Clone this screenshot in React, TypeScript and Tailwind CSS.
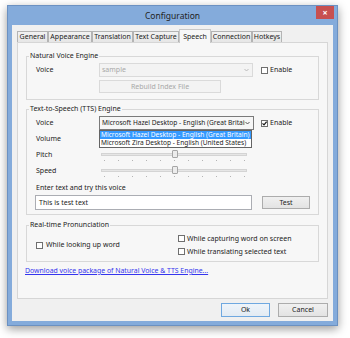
import React from 'react';

function Chevron({ color = '#444' }: { color?: string }) {
  return (
    <svg width="5" height="4" viewBox="0 0 5 4" className="shrink-0">
      <path d="M0.5 1 L2.5 3 L4.5 1" stroke={color} strokeWidth="0.9" fill="none" />
    </svg>
  );
}

function Check({ checked, className = '' }: { checked?: boolean; className?: string }) {
  return (
    <span className={`flex h-[7px] w-[7px] shrink-0 items-center justify-center border border-[#6f6f6f] bg-white ${className}`}>
      {checked && (
        <svg width="5" height="5" viewBox="0 0 5 5">
          <path d="M0.5 2.4 L2 3.9 L4.6 0.7" stroke="#1e1e1e" strokeWidth="1.2" fill="none" />
        </svg>
      )}
    </span>
  );
}

function Slider() {
  return (
    <div className="relative flex h-[16px] w-[151px] flex-col">
      <div className="ml-[2px] mr-[3px] mt-[6px] h-[3px] border border-[#d4d4d4] bg-[#e6e6e6]" />
      {/* thumb */}
      <div className="absolute left-[73px] top-[3px] h-[8px] w-[6px] rounded-[1px] border border-[#a6a6a6] bg-[#ececec]" />
      <div className="mt-[4px] flex justify-between px-[5px]">
        {Array.from({ length: 11 }).map((_, i) => (
          <span key={i} className="h-[1px] w-[1px] bg-[#b4b4b4]" />
        ))}
      </div>
    </div>
  );
}

const tabs = [
  { name: 'General', w: 'w-[31px]' },
  { name: 'Appearance', w: 'w-[44px]' },
  { name: 'Translation', w: 'w-[41px]' },
  { name: 'Text Capture', w: 'w-[46px]' },
  { name: 'Speech', w: 'w-[32px]', active: true },
  { name: 'Connection', w: 'w-[41px]' },
  { name: 'Hotkeys', w: 'w-[30px]' },
];

export default function App() {
  return (
    <div className="h-[338px] w-[350px] bg-white pl-[7px] pt-[5px] font-['Noto_Sans',sans-serif] text-[7px] leading-[10px] text-[#1b1b1b]">
      <div className="flex h-[321px] w-[331px] flex-col border border-[#6b91c2] bg-[#84abdb] shadow-[0_3px_9px_rgba(0,0,0,0.4)]">
        {/* title bar */}
        <div className="relative flex h-[19px] items-center justify-center text-[8.5px] text-[#222]">
          Configuration
          <div className="absolute right-[3px] top-0 flex h-[13px] w-[18px] items-center justify-center bg-[#c75050] text-[9px] font-bold leading-none text-white">
            ×
          </div>
        </div>

        {/* client area */}
        <div className="mx-[4px] mb-[4px] flex flex-1 flex-col bg-[#f0f0f0] pb-[4px] pt-[4px]">
          <div className="flex h-[13px] items-end pl-[5px]">
            {tabs.map((t) =>
              t.active ? (
                <div
                  key={t.name}
                  className={`relative z-10 -mb-[1px] flex h-[14px] ${t.w} items-center justify-center border border-b-0 border-[#c8c8c8] bg-[#f7f7f7]`}
                >
                  {t.name}
                </div>
              ) : (
                <div
                  key={t.name}
                  className={`flex h-[11px] ${t.w} items-center justify-center border border-b-0 border-[#b4b4b4] bg-gradient-to-b from-[#f2f2f2] to-[#e6e6e6]`}
                >
                  {t.name}
                </div>
              )
            )}
          </div>

          {/* tab page */}
          <div className="ml-[5px] mr-[5px] flex h-[257px] flex-col border border-[#d6d6d6] bg-[#f7f7f7] pt-[8px]">
            <fieldset className="mx-[8px] border border-[#d8d8d8]">
              <legend className="ml-[2px] px-[1px]">Natural Voice Engine</legend>
              <div className="pb-[6px] pl-[9px] pt-[2px]">
                <div className="flex h-[14px] items-center">
                  <span className="w-[63px]">Voice</span>
                  <div className="flex h-[14px] w-[154px] items-center justify-between border border-[#dadada] bg-[#f3f3f3] pl-[2px] pr-[3px] text-[#a8a8a8]">
                    <span>sample</span>
                    <Chevron color="#b5b5b5" />
                  </div>
                  <Check className="ml-[8px]" />
                  <span className="ml-[2px]">Enable</span>
                </div>
                <div className="ml-[63px] mt-[3px] flex h-[13px] w-[122px] items-center justify-center border border-[#dadada] bg-[#f3f3f3] text-[#a8a8a8]">
                  Rebuild Index File
                </div>
              </div>
            </fieldset>

            <fieldset className="mx-[8px] mt-[4px] border border-[#d8d8d8]">
              <legend className="ml-[2px] px-[1px]">Text-to-Speech (TTS) Engine</legend>
              <div className="pb-[4px] pl-[9px] pt-[2px]">
                <div className="flex h-[14px] items-center">
                  <span className="w-[63px]">Voice</span>
                  <div className="relative flex h-[14px] w-[155px] items-center justify-between border border-[#7a7a7a] bg-[#f6f6f6] pl-[2px] pr-[3px] text-[6.6px]">
                    <span className="min-w-0 flex-1 overflow-hidden whitespace-nowrap">Microsoft Hazel Desktop - English (Great Britain)</span>
                    <Chevron />
                    <div className="absolute left-[-1px] top-[13px] z-10 flex w-[153px] flex-col border border-[#646464] bg-white leading-[8px]">
                      <span className="h-[8px] whitespace-nowrap bg-[#3399ff] pl-[1px] text-white">
                        Microsoft Hazel Desktop - English (Great Britain)
                      </span>
                      <span className="h-[8px] whitespace-nowrap pl-[1px]">
                        Microsoft Zira Desktop - English (United States)
                      </span>
                    </div>
                  </div>
                  <Check checked className="ml-[7px]" />
                  <span className="ml-[2px]">Enable</span>
                </div>
                <div className="mt-[1px] flex flex-col">
                  {['Volume', 'Pitch', 'Speed'].map((l) => (
                    <div key={l} className="flex h-[16px] items-center">
                      <span className="w-[63px]">{l}</span>
                      <Slider />
                    </div>
                  ))}
                </div>
                <div className="mt-[3px] flex h-[12px] items-center">Enter text and try this voice</div>
                <div className="mt-[1px] flex h-[15px] items-center">
                  <div className="-ml-[1px] flex h-[15px] w-[217px] items-center border border-[#abadb3] bg-white pl-[3px]">
                    This is test text
                  </div>
                  <div className="ml-[10px] flex h-[13px] w-[48px] items-center justify-center border border-[#acacac] bg-gradient-to-b from-[#f0f0f0] to-[#e3e3e3]">
                    Test
                  </div>
                </div>
              </div>
            </fieldset>

            <fieldset className="mx-[8px] mt-[5px] border border-[#d8d8d8]">
              <legend className="ml-[2px] px-[1px]">Real-time Pronunciation</legend>
              <div className="mb-[3px] mt-[2px] flex h-[26px] pl-[9px]">
                <div className="flex w-[142px] items-center">
                  <Check />
                  <span className="ml-[3px]">While looking up word</span>
                </div>
                <div className="flex flex-col">
                  <div className="flex h-[13px] items-center">
                    <Check />
                    <span className="ml-[2px]">While capturing word on screen</span>
                  </div>
                  <div className="flex h-[13px] items-center">
                    <Check />
                    <span className="ml-[2px]">While translating selected text</span>
                  </div>
                </div>
              </div>
            </fieldset>

            <a className="ml-[7px] mt-[4px] h-[10px] self-start text-[6.9px] text-[#3535ee] underline">
              Download voice package of Natural Voice &amp; TTS Engine...
            </a>
          </div>

          {/* bottom buttons */}
          <div className="mt-[4px] flex justify-end gap-[8px] pr-[5px]">
            <div className="flex h-[14px] w-[49px] items-center justify-center border border-[#6fa8e0] bg-gradient-to-b from-[#eef4fa] to-[#e3ebf3]">
              Ok
            </div>
            <div className="flex h-[14px] w-[50px] items-center justify-center border border-[#acacac] bg-gradient-to-b from-[#f0f0f0] to-[#e3e3e3]">
              Cancel
            </div>
          </div>
        </div>
      </div>
    </div>
  );
}
